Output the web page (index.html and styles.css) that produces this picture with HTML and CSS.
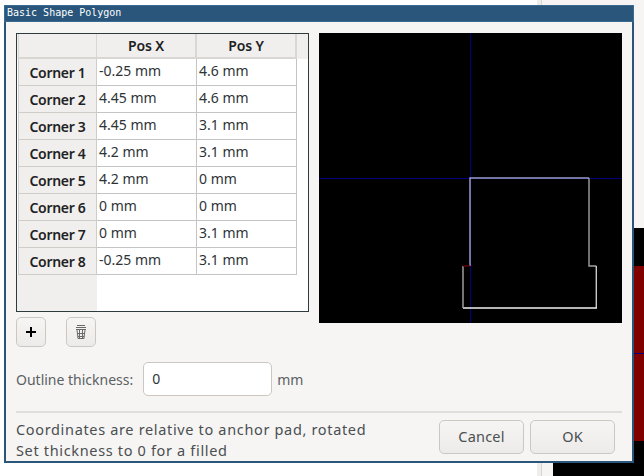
FILE: index.html
```html
<!DOCTYPE html>
<html lang="en">
<head>
<meta charset="utf-8">
<title>Basic Shape Polygon</title>
<link rel="stylesheet" href="styles.css">
</head>
<body>
<div class="desktop">
  <div class="bg-white"></div>
  <div class="bg-strip"></div>
  <div class="bg-black-right"></div>
  <div class="bg-red"><div class="bg-red-line"></div></div>
  <div class="bg-black-bottom"></div>

  <div class="window">
    <div class="titlebar">Basic Shape Polygon</div>
    <div class="content">
      <div class="top">
        <div class="left">
          <div class="gridframe">
            <div class="grid">
              <div class="row head">
                <div class="corner"></div>
                <div class="colhead">Pos X</div>
                <div class="colhead">Pos Y</div>
              </div>
              <div class="row"><div class="rowhead">Corner 1</div><div class="cell">-0.25 mm</div><div class="cell">4.6 mm</div></div>
              <div class="row"><div class="rowhead">Corner 2</div><div class="cell">4.45 mm</div><div class="cell">4.6 mm</div></div>
              <div class="row"><div class="rowhead">Corner 3</div><div class="cell">4.45 mm</div><div class="cell">3.1 mm</div></div>
              <div class="row"><div class="rowhead">Corner 4</div><div class="cell">4.2 mm</div><div class="cell">3.1 mm</div></div>
              <div class="row"><div class="rowhead">Corner 5</div><div class="cell">4.2 mm</div><div class="cell">0 mm</div></div>
              <div class="row"><div class="rowhead">Corner 6</div><div class="cell">0 mm</div><div class="cell">0 mm</div></div>
              <div class="row"><div class="rowhead">Corner 7</div><div class="cell">0 mm</div><div class="cell">3.1 mm</div></div>
              <div class="row"><div class="rowhead">Corner 8</div><div class="cell">-0.25 mm</div><div class="cell">3.1 mm</div></div>
              <div class="grid-rest"></div>
            </div>
          </div>
          <div class="tools">
            <button class="toolbtn" type="button" aria-label="Add">
              <svg width="10" height="10" viewBox="0 0 10 10"><path d="M4 0h2v4h4v2H6v4H4V6H0V4h4z" fill="#000"/></svg>
            </button>
            <button class="toolbtn" type="button" aria-label="Delete">
              <svg width="12" height="14" viewBox="0 0 12 14" fill="none" stroke="#6a6a6a" stroke-width="1"><path d="M2 .5h8M1 2.500h10M1 4.500h10M2 8.500h8M2 4.500l1 9h6l1-9M4.500 4.500v9M7.500 4.500v9M3 11.500h6"/></svg>
            </button>
          </div>
        </div>
        <div class="preview">
          <svg width="303" height="290" viewBox="0 0 303 290">
            <path d="M0 145.500H303M151.500 0V290" stroke="#00007f" stroke-width="1" fill="none"/>
            <path d="M151 233V145H270" stroke="#9a9ac6" stroke-width="1.500" fill="none"/>
            <path d="M270 145V233H277.300" stroke="#a0a0a0" stroke-width="1.400" fill="none"/>
            <path d="M277.300 233V275" stroke="#c8c8c8" stroke-width="1.400" fill="none"/>
            <path d="M144 275H278" stroke="#f2f2f2" stroke-width="1.400" fill="none"/>
            <path d="M144 275V233" stroke="#a8a8a8" stroke-width="1.400" fill="none"/>
            <path d="M144 233H151" stroke="#6a0000" stroke-width="1.400" fill="none"/>
          </svg>
        </div>
      </div>
      <div class="thickness">
        <span class="label">Outline thickness:</span>
        <div class="input">0</div>
        <span class="label unit">mm</span>
      </div>
      <div class="separator"></div>
      <div class="footer">
        <div class="note">Coordinates are relative to anchor pad, rotated<br>Set thickness to 0 for a filled</div>
        <div class="buttons">
          <button class="btn" type="button">Cancel</button>
          <button class="btn" type="button">OK</button>
        </div>
      </div>
    </div>
  </div>
</div>
</body>
</html>
```
FILE: styles.css
```css
* { box-sizing: border-box; }
html, body { margin: 0; padding: 0; }
body { font-family: "Noto Sans", sans-serif; }
.desktop { position: relative; width: 644px; height: 476px; overflow: hidden; background: #f6f5f4; }
.bg-white { position: absolute; left: 0; top: 0; width: 537px; height: 476px; background: #fff; }
.bg-strip { position: absolute; left: 537px; top: 0; width: 5px; height: 476px; background: #efeeec; border-right: 1px solid #d8d6d2; }
.bg-black-right { position: absolute; left: 553px; top: 228px; width: 91px; height: 38px; background: #000; }
.bg-red { position: absolute; left: 553px; top: 266px; width: 91px; height: 175px; background: #800000; }
.bg-red-line { height: 1px; margin-top: 87px; background: #00007f; }
.bg-black-bottom { position: absolute; left: 553px; top: 441px; width: 91px; height: 35px; background: #000; }

.window { position: absolute; left: 4px; top: 5px; width: 630px; height: 458px; display: flex; flex-direction: column; border: 2px solid #29567a; border-top: 0; background: #f6f5f4; }
.titlebar { height: 17px; margin: 0 -2px; padding: 0 0 0 2px; background: #29567a; border: 1px solid #3b6a90; color: #fff; font: 10px/14px "DejaVu Sans Mono", monospace; }
.content { flex: 1; padding: 11px 10px 0; display: flex; flex-direction: column; }
.top { display: flex; justify-content: space-between; height: 314px; }
.left { width: 293px; }
.gridframe { height: 279px; border: 1px solid #2e3b3f; background: #fff; }
.grid { display: flex; flex-direction: column; height: 100%; }
.row { display: flex; height: 27px; padding-left: 1px; }
.row.head { height: 25px; background: #f0efed; padding-left: 1px; }
.corner { width: 79px; background: #f0efed; border-right: 1px solid #dad7d2; border-bottom: 2px solid #dad7d2; border-left: 1px solid #dad7d2; }
.colhead { width: 100px; text-align: center; font-size: 14px; font-weight: 600; line-height: 23px; letter-spacing: -0.1px; color: #1e2224; background: #f0efed; border-right: 2px solid #dad7d2; border-bottom: 2px solid #dad7d2; }
.rowhead { width: 79px; padding-top: 4px; text-align: center; font-size: 14px; font-weight: 600; line-height: 20px; letter-spacing: -0.3px; white-space: nowrap; color: #1e2224; background: #f0efed; border-bottom: 1px solid #d0cdc8; border-right: 1px solid #d0cdc8; border-left: 1px solid #d0cdc8; }
.cell { width: 100px; padding: 1px 0 0 2px; font-size: 14px; line-height: 22px; color: #2e3436; background: #fff; border-right: 1px solid #c4c4c4; border-bottom: 1px solid #c4c4c4; }
.grid-rest { flex: 1; width: 80px; background: #f0efed; }
.tools { display: flex; gap: 20px; margin-top: 5px; }
.toolbtn { width: 30px; height: 30px; padding: 0; display: flex; align-items: center; justify-content: center; border: 1px solid #cdc7c2; border-radius: 5px; background: linear-gradient(#f6f5f4, #edebe9); }
.preview { width: 303px; height: 290px; background: #000; }
.preview svg { display: block; }
.thickness { display: flex; align-items: center; height: 34px; margin-top: 15px; }
.label { font-size: 14px; color: #5c6163; }
.input { width: 129px; height: 34px; margin-left: 10px; padding-left: 8px; border: 1px solid #cdc7c2; border-radius: 5px; background: #fff; font-size: 14px; line-height: 32px; color: #2e3436; }
.unit { margin-left: 5px; }
.separator { height: 2px; margin-top: 15px; background: #dfdedb; }
.footer { display: flex; justify-content: space-between; }
.note { padding-top: 6px; font-size: 14.500px; line-height: 21px; letter-spacing: 0.66px; color: #4a4f51; white-space: nowrap; }
.buttons { display: flex; gap: 6px; margin: 7px 7px 0 0; }
.btn { width: 85px; height: 34px; padding: 0 0 2px; border: 1px solid #cdc7c2; border-radius: 5px; background: linear-gradient(#f6f5f4, #edebe9); font-family: "Noto Sans", sans-serif; font-size: 14.500px; letter-spacing: 0.2px; color: #4a4f51; }
```
